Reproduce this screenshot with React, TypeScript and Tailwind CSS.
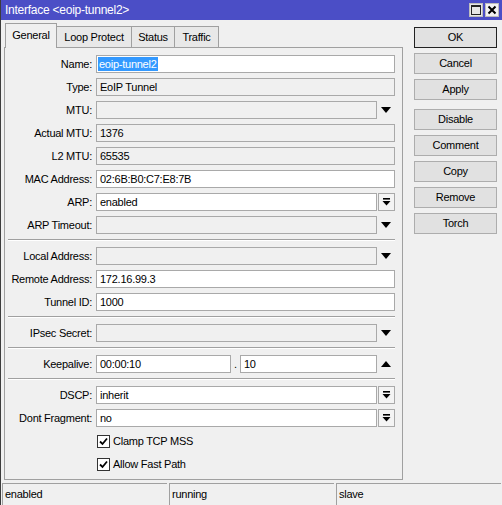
import React from 'react';

const DownIcon = () => (
  <svg width="10" height="6" viewBox="0 0 10 6">
    <path d="M0 0h10L5 6z" fill="#000" />
  </svg>
);

const UpIcon = () => (
  <svg width="10" height="6" viewBox="0 0 10 6">
    <path d="M0 6h10L5 0z" fill="#000" />
  </svg>
);

const BarDownIcon = () => (
  <svg width="9" height="8" viewBox="0 0 9 8">
    <rect x="1" y="0" width="7" height="1.6" fill="#000" />
    <path d="M0.5 3h8L4.5 7.5z" fill="#000" />
  </svg>
);

function Field({
  value,
  disabled,
  selected,
  className = 'w-[299px]'
}: {
  value?: string;
  disabled?: boolean;
  selected?: boolean;
  className?: string;
}) {
  return (
    <div
      className={`h-[18px] border border-[#a9a9a9] flex items-center px-[3px] shrink-0 ${disabled ? 'bg-[#f0f0f0]' : 'bg-white'} ${className}`}>
      {selected ?
      <span className="-ml-[2px] pl-[1px] pr-[1px] bg-[#3399ff] text-white leading-[14px]">
          {value}
        </span> :

      <span className="text-black leading-[14px]">{value}</span>
      }
    </div>);

}

function Row({ label, children }: { label: string; children: React.ReactNode }) {
  return (
    <div className="flex items-center h-[18px]">
      <div className="w-[87px] shrink-0 text-right text-black">{label}</div>
      <div className="ml-[4px] flex items-center">{children}</div>
    </div>);

}

const Plain = ({ value, disabled }: { value?: string; disabled?: boolean }) =>
<Field value={value} disabled={disabled} className="w-[281px]" />;


const ArrowSlot = ({ children }: { children: React.ReactNode }) =>
<div className="w-[18px] h-[18px] flex items-center justify-center">{children}</div>;


const BoxButton = () =>
<div className="ml-[1px] w-[17px] h-[18px] border border-[#a9a9a9] bg-[#f4f4f4] flex items-center justify-center">
    <BarDownIcon />
  </div>;


const Sep = () =>
<div className="mt-[5px] mb-[6px] ml-[3px] w-[387px] border-t border-[#a0a0a0] border-b border-b-white" />;


function Group({ children }: { children: React.ReactNode }) {
  return <div className="flex flex-col gap-[5px]">{children}</div>;
}

function Check({ label }: { label: string }) {
  return (
    <div className="flex items-center h-[18px] pl-[92px]">
      <div className="w-[13px] h-[13px] border border-[#333] bg-white flex items-center justify-center">
        <svg width="9" height="9" viewBox="0 0 9 9">
          <path d="M1 4.5 L3.5 7 L8 1.5" stroke="#000" strokeWidth="1.8" fill="none" />
        </svg>
      </div>
      <span className="ml-[3px] text-black">{label}</span>
    </div>);

}

const buttons = [
['OK', 'Cancel', 'Apply'],
['Disable', 'Comment', 'Copy', 'Remove', 'Torch']];


export default function App() {
  return (
    <div className="w-[502px] h-[505px] bg-[#f0f0f0] flex flex-col overflow-hidden text-[11px] tracking-[-0.25px] font-['Liberation_Sans',Arial,sans-serif] border-l border-[#3c3c3c]">
      {/* Title bar */}
      <div className="h-[20px] shrink-0 bg-[#4b4ec6] flex items-center justify-between pl-[4px] pr-[3px]">
        <span className="text-white text-[12px]">Interface &lt;eoip-tunnel2&gt;</span>
        <div className="flex gap-[2px]">
          <div className="w-[14px] h-[14px] bg-[#e6e6e6] border border-[#bdbdbd] flex items-center justify-center">
            <div className="w-[10px] h-[10px] border border-[#222] border-t-2" />
          </div>
          <div className="w-[14px] h-[14px] bg-[#f2f2f2] border border-[#bdbdbd] flex items-center justify-center">
            <svg width="10" height="10" viewBox="0 0 10 10">
              <path d="M1.5 1.5 L8.5 8.5 M8.5 1.5 L1.5 8.5" stroke="#000" strokeWidth="2" />
            </svg>
          </div>
        </div>
      </div>

      <div className="flex flex-1">
        {/* Left: tabs + panel */}
        <div className="ml-[3px] w-[399px] flex flex-col pt-[3px]">
          <div className="flex items-end h-[24px] pl-[1px]">
            <div className="relative z-10 -mb-[1px] w-[52px] h-[25px] border border-b-0 border-[#a0a0a0] bg-[#f0f0f0] flex items-center justify-center pb-[2px] text-black">
              General
            </div>
            {[
            ['Loop Protect', 'w-[75px]'],
            ['Status', 'w-[43px]'],
            ['Traffic', 'w-[44px]']].
            map(([t, w]) =>
            <div
              key={t}
              className={`${w} h-[21px] border-t border-r border-[#a0a0a0] bg-[#e8e8e8] flex items-center justify-center text-black`}>
                {t}
              </div>
            )}
          </div>

          <div className="h-[433px] border border-[#a0a0a0] flex flex-col pt-[7px]">
            <Group>
              <Row label="Name:">
                <Field value="eoip-tunnel2" selected />
              </Row>
              <Row label="Type:">
                <Field value="EoIP Tunnel" disabled />
              </Row>
              <Row label="MTU:">
                <Plain disabled />
                <ArrowSlot>
                  <DownIcon />
                </ArrowSlot>
              </Row>
              <Row label="Actual MTU:">
                <Field value="1376" disabled />
              </Row>
              <Row label="L2 MTU:">
                <Field value="65535" disabled />
              </Row>
              <Row label="MAC Address:">
                <Field value="02:6B:B0:C7:E8:7B" />
              </Row>
              <Row label="ARP:">
                <Plain value="enabled" />
                <BoxButton />
              </Row>
              <Row label="ARP Timeout:">
                <Plain disabled />
                <ArrowSlot>
                  <DownIcon />
                </ArrowSlot>
              </Row>
            </Group>
            <Sep />
            <Group>
              <Row label="Local Address:">
                <Plain disabled />
                <ArrowSlot>
                  <DownIcon />
                </ArrowSlot>
              </Row>
              <Row label="Remote Address:">
                <Field value="172.16.99.3" />
              </Row>
              <Row label="Tunnel ID:">
                <Field value="1000" />
              </Row>
            </Group>
            <Sep />
            <Group>
              <Row label="IPsec Secret:">
                <Plain disabled />
                <ArrowSlot>
                  <DownIcon />
                </ArrowSlot>
              </Row>
            </Group>
            <Sep />
            <Group>
              <Row label="Keepalive:">
                <Field value="00:00:10" className="w-[135px]" />
                <div className="w-[9px] text-center text-black">.</div>
                <Field value="10" className="w-[137px]" />
                <ArrowSlot>
                  <UpIcon />
                </ArrowSlot>
              </Row>
            </Group>
            <Sep />
            <Group>
              <Row label="DSCP:">
                <Plain value="inherit" />
                <BoxButton />
              </Row>
              <Row label="Dont Fragment:">
                <Plain value="no" />
                <BoxButton />
              </Row>
              <Check label="Clamp TCP MSS" />
              <Check label="Allow Fast Path" />
            </Group>
          </div>
        </div>

        {/* Right: buttons */}
        <div className="ml-[11px] pt-[7px] flex flex-col gap-[9px]">
          {buttons.map((grp, gi) =>
          <div key={gi} className="flex flex-col gap-[5px]">
              {grp.map((b) =>
            <div
              key={b}
              className={`w-[83px] h-[21px] bg-[#e1e1e1] border flex items-center justify-center text-black ${b === 'OK' ? 'border-[#222]' : 'border-[#adadad]'}`}>
                  {b}
                </div>
            )}
            </div>
          )}
        </div>
      </div>

      {/* Status bar */}
      <div className="h-[22px] shrink-0 mt-[3px] flex gap-[2px] pl-[1px] pr-[1px]">
        {['enabled', 'running', 'slave'].map((s) =>
        <div
          key={s}
          className="flex-1 border-t border-l border-[#a0a0a0] flex items-center pl-[2px] text-black">
            {s}
          </div>
        )}
      </div>
    </div>);

}
